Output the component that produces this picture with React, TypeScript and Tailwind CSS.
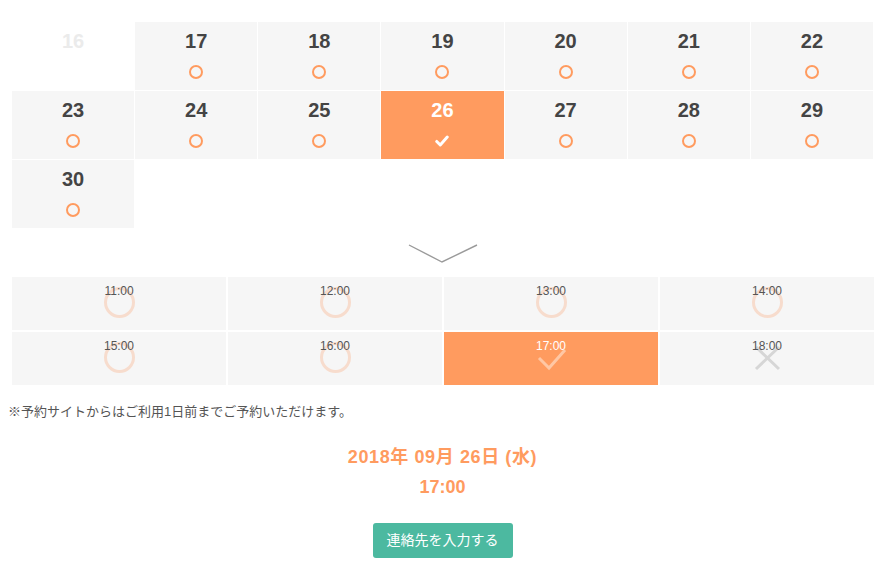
import React from 'react';

type Day = { d: number; state: 'off' | 'open' | 'selected' };

const days: (Day | null)[] = [
  { d: 16, state: 'off' },
  { d: 17, state: 'open' },
  { d: 18, state: 'open' },
  { d: 19, state: 'open' },
  { d: 20, state: 'open' },
  { d: 21, state: 'open' },
  { d: 22, state: 'open' },
  { d: 23, state: 'open' },
  { d: 24, state: 'open' },
  { d: 25, state: 'open' },
  { d: 26, state: 'selected' },
  { d: 27, state: 'open' },
  { d: 28, state: 'open' },
  { d: 29, state: 'open' },
  { d: 30, state: 'open' },
];

type Slot = { t: string; state: 'open' | 'selected' | 'full' };

const slots: Slot[] = [
  { t: '11:00', state: 'open' },
  { t: '12:00', state: 'open' },
  { t: '13:00', state: 'open' },
  { t: '14:00', state: 'open' },
  { t: '15:00', state: 'open' },
  { t: '16:00', state: 'open' },
  { t: '17:00', state: 'selected' },
  { t: '18:00', state: 'full' },
];

const DayCell: React.FC<{ day: Day }> = ({ day }) => {
  if (day.state === 'off') {
    return (
      <div className="h-[68px] bg-white flex flex-col items-center pt-[7px]">
        <span className="text-[20px] leading-[24px] font-bold text-[#ebebeb]">{day.d}</span>
      </div>
    );
  }
  const selected = day.state === 'selected';
  return (
    <div className={`h-[68px] flex flex-col items-center pt-[7px] ${selected ? 'bg-[#ff9b5f]' : 'bg-[#f6f6f6]'}`}>
      <span className={`text-[20px] leading-[24px] font-bold ${selected ? 'text-white' : 'text-[#444444]'}`}>{day.d}</span>
      <div className="mt-3 w-[14px] h-[14px] flex items-center justify-center">
        {selected ? (
          <svg width="16" height="14" viewBox="0 0 16 14">
            <path d="M2 7.5 L6 11.5 L14 2.5" fill="none" stroke="#ffffff" strokeWidth="3.4" strokeLinecap="round" strokeLinejoin="round" />
          </svg>
        ) : (
          <span className="block w-[14px] h-[14px] rounded-full border-2 border-[#ff9b5f]" />
        )}
      </div>
    </div>
  );
};

const SlotCell: React.FC<{ slot: Slot }> = ({ slot }) => {
  const selected = slot.state === 'selected';
  return (
    <div className={`h-[53px] flex flex-col items-center pt-[7px] ${selected ? 'bg-[#ff9b5f]' : 'bg-[#f6f6f6]'}`}>
      <span className={`relative z-10 text-[12px] leading-[14px] ${selected ? 'text-white' : 'text-[#555555]'}`}>{slot.t}</span>
      <div className="-mt-[11px] w-[31px] h-[31px] flex items-center justify-center">
        {slot.state === 'open' && (
          <span className="block w-[31px] h-[31px] rounded-full border-[3px] border-[#f7dccd]" />
        )}
        {slot.state === 'selected' && (
          <svg width="31" height="31" viewBox="0 0 31 31">
            <path d="M3 16 L13 26 L29 8" fill="none" stroke="#ffc7a4" strokeWidth="3" />
          </svg>
        )}
        {slot.state === 'full' && (
          <svg width="31" height="31" viewBox="0 0 31 31">
            <path d="M4 5 L27 27 M27 5 L4 27" fill="none" stroke="#d6d6d6" strokeWidth="3" />
          </svg>
        )}
      </div>
    </div>
  );
};

export default function App() {
  return (
    <div
      className="w-[891px] h-[564px] bg-white overflow-hidden pl-3 pr-[18px] pt-[22px]"
      style={{ fontFamily: '"Liberation Sans", Arial, "Noto Sans CJK JP", sans-serif' }}
    >
      <div className="grid grid-cols-7 gap-[1px] w-[861px]">
        {days.map((day, i) =>
          day ? <DayCell key={i} day={day} /> : <div key={i} />
        )}
      </div>

      <div className="flex justify-center mt-[15px]">
        <svg width="70" height="20" viewBox="0 0 70 20">
          <polyline points="1,2 34,19 69,2" fill="none" stroke="#9a9a9a" strokeWidth="1.4" />
        </svg>
      </div>

      <div className="grid grid-cols-4 gap-[2px] w-[862px] mt-[14px]">
        {slots.map((s) => (
          <SlotCell key={s.t} slot={s} />
        ))}
      </div>

      <p className="-ml-1 mt-[17px] text-[13px] leading-[20px] text-[#555555]">
        ※予約サイトからはご利用1日前までご予約いただけます。
      </p>

      <div className="mt-5 flex flex-col items-center text-[#ff9b5f] font-bold text-[18px] leading-[30px]">
        <span className="tracking-[0.6px]">2018年 09月 26日 (水)</span>
        <span>17:00</span>
      </div>

      <div className="mt-[21px] flex justify-center">
        <button className="w-[140px] h-[35px] rounded-[3px] bg-[#4cb9a0] text-white text-[14px]">
          連絡先を入力する
        </button>
      </div>
    </div>
  );
}
